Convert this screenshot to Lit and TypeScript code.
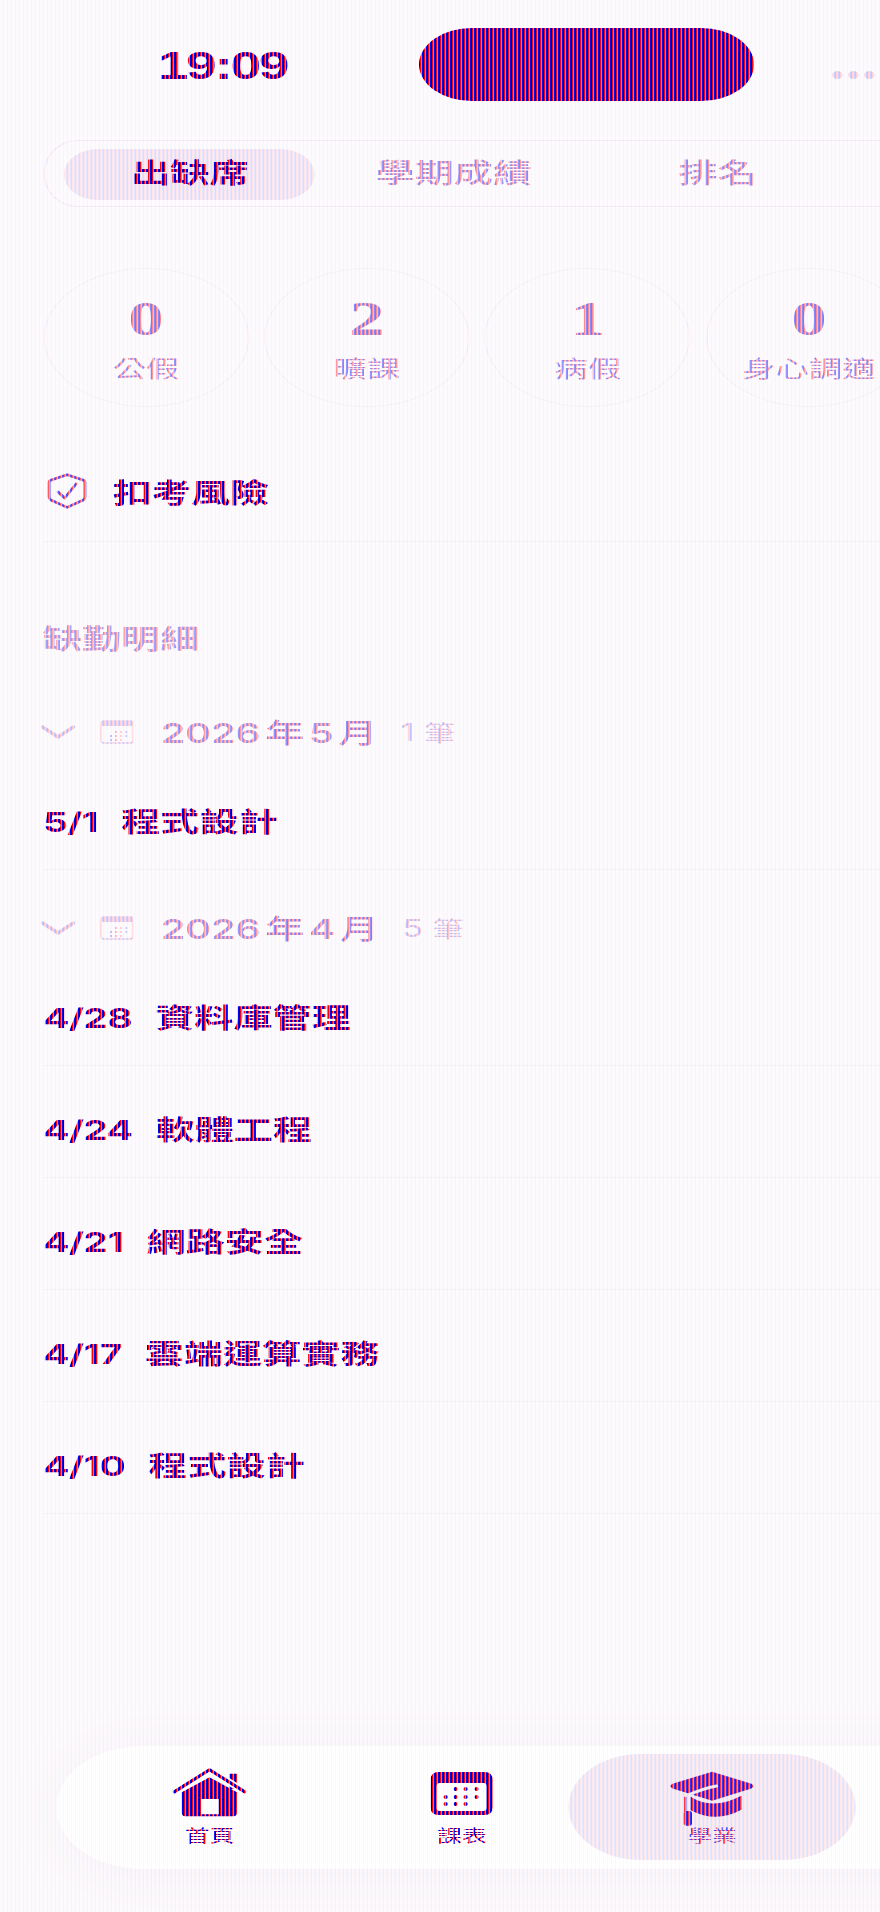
import {css, html, LitElement, svg} from "lit";
import {customElement} from "lit/decorators.js";

interface Absence {
  date: string;
  course: string;
}

interface MonthGroup {
  label: string[];
  count: string;
  rows: Absence[];
}

const STATS = [
  {value: "0", label: "公假"},
  {value: "2", label: "曠課"},
  {value: "1", label: "病假"},
  {value: "0", label: "身心調適"},
];

const MONTHS: MonthGroup[] = [
  {
    label: ["2026", "年", "5", "月"],
    count: "1",
    rows: [{date: "5/1", course: "程式設計"}],
  },
  {
    label: ["2026", "年", "4", "月"],
    count: "5",
    rows: [
      {date: "4/28", course: "資料庫管理"},
      {date: "4/24", course: "軟體工程"},
      {date: "4/21", course: "網路安全"},
      {date: "4/17", course: "雲端運算實務"},
      {date: "4/10", course: "程式設計"},
    ],
  },
];

// the whole reference is stretched sideways, so all icons use preserveAspectRatio none
const chevron = svg`<polyline points="2,2 17.5,12 33,2" fill="none" stroke="#c6c6ca" stroke-width="3.5" stroke-linecap="round" stroke-linejoin="round"/>`;

const smallCalendar = svg`
  <rect x="1" y="1" width="32" height="22" rx="3" fill="none" stroke="#cfcfd3" stroke-width="1.6"/>
  <rect x="1" y="1" width="32" height="5" rx="2" fill="#cfcfd3"/>
  ${[[15, 11], [20, 11], [25, 11], [10, 15], [15, 15], [20, 15], [25, 15], [10, 19], [15, 19], [20, 19]].map(
    ([x, y]) => svg`<rect x=${x} y=${y} width="2" height="2" fill="#c6c6ca"/>`
  )}
`;

@customElement("app-root")
export class AppRoot extends LitElement {
  static styles = css`
    :host {
      display: block;
      position: relative;
      width: 880px;
      height: 1912px;
      overflow: hidden;
      isolation: isolate;
      background: #fbfbfc;
      color: #000;
      font-family: "Liberation Sans", "Noto Sans CJK TC", sans-serif;
    }

    .page {
      display: flex;
      flex-direction: column;
      width: 607px;
      height: 1912px;
      overflow: hidden;
      transform: scaleX(1.45);
      transform-origin: 0 0;
    }

    .lcd,
    .tint {
      position: absolute;
      inset: 0;
      pointer-events: none;
    }

    .lcd {
      mix-blend-mode: screen;
      background: repeating-linear-gradient(90deg, #f00 0 1px, #0f0 1px 2px, #00f 2px 3px, #000 3px 4px);
    }

    .tint {
      mix-blend-mode: multiply;
      background: repeating-linear-gradient(90deg, #fff 0 1px, #f9fcfb 1px 2px, #fff 2px 3px, #fcf8fa 3px 4px);
    }

    .status {
      display: flex;
      flex: none;
      height: 140px;
      padding: 28px 0 0 108.8px;
      box-sizing: border-box;
    }

    .time {
      width: 180px;
      height: 76px;
      line-height: 76px;
      font-size: 38px;
      font-weight: 700;
      letter-spacing: -1.6px;
    }

    .island {
      width: 231px;
      height: 73px;
      border-radius: 37px;
      background: #000;
    }

    .dots {
      display: flex;
      gap: 3.4px;
      margin: 43px 0 0 54px;
    }

    .dots i {
      width: 7.6px;
      height: 8px;
      border-radius: 4px;
      background: #cfcfd3;
    }

    .tabs {
      display: flex;
      flex: none;
      gap: 9px;
      width: 640px;
      height: 67px;
      margin-left: 29.7px;
      padding: 8px 0 0 13.8px;
      box-sizing: border-box;
      border: 1px solid #eaeaed;
      border-radius: 24px / 34px;
    }

    .tab {
      flex: none;
      width: 173px;
      height: 51px;
      line-height: 51px;
      border-radius: 24px / 26px;
      text-align: center;
      font-size: 27px;
      font-weight: 500;
      color: #98989d;
    }

    .tab.on {
      background: #e5e5e7;
      color: #000;
      font-weight: 700;
    }

    .stats {
      display: flex;
      flex: none;
      gap: 10.4px;
      margin: 61px 0 0 29.7px;
    }

    .stat {
      display: flex;
      flex: none;
      flex-direction: column;
      align-items: center;
      width: 142px;
      height: 139px;
      box-sizing: border-box;
      padding-top: 22px;
      border: 1px solid #f1f1f3;
      border-radius: 50%;
    }

    .stat b {
      height: 56px;
      line-height: 56px;
      font-family: "Liberation Serif", serif;
      font-size: 49px;
      font-weight: 700;
      color: #8a8a8e;
    }

    .stat span {
      margin-top: 6px;
      line-height: 32px;
      font-size: 23px;
      color: #97979c;
    }

    .risk {
      display: flex;
      flex: none;
      align-items: center;
      gap: 17px;
      height: 70px;
      margin: 49px 0 0 29.7px;
      padding: 0 0 15px 2.5px;
      border-bottom: 1px solid #f0f0f2;
      font-size: 27px;
      font-weight: 700;
    }

    .risk svg {
      width: 28.5px;
      height: 36px;
    }

    .section {
      flex: none;
      height: 30px;
      line-height: 30px;
      margin: 83px 0 0 29.5px;
      font-size: 27px;
      font-weight: 700;
      color: #a6a6aa;
    }

    .month {
      display: flex;
      flex: none;
      align-items: center;
      height: 51px;
      margin-left: 28px;
      padding-bottom: 2px;
      box-sizing: border-box;
    }

    .month .chev {
      width: 24px;
      height: 14px;
    }

    .month .cal {
      width: 23.5px;
      height: 24px;
      margin: 0 19px 0 16.5px;
    }

    .month-label {
      display: flex;
      align-items: baseline;
      gap: 3.2px;
      font-size: 27px;
      font-weight: 500;
      color: #8f8f94;
    }

    .num {
      font-family: Inter, "Liberation Sans", sans-serif;
    }

    .month-label .num {
      font-size: 27px;
      font-weight: 600;
      color: #9c9ca0;
    }

    .count {
      display: flex;
      align-items: baseline;
      gap: 6.5px;
      margin-left: 16px;
      font-size: 21.5px;
      color: #c4c4c8;
    }

    .count .num {
      font-size: 24px;
    }

    .group {
      margin-top: 33px;
    }

    .row {
      display: flex;
      flex: none;
      align-items: baseline;
      gap: 16px;
      height: 112px;
      margin-left: 29.7px;
      padding-top: 50px;
      box-sizing: border-box;
      border-bottom: 1px solid #f0f0f2;
      line-height: 30px;
      font-size: 27px;
      font-weight: 700;
    }

    .row .num {
      font-size: 27px;
      letter-spacing: -0.5px;
    }

    .nav {
      display: flex;
      flex: none;
      width: 720px;
      height: 123px;
      margin: auto 0 43px 38.6px;
      padding: 8px 0 9px 19px;
      box-sizing: border-box;
      border-radius: 60px / 62px;
      background: #fff;
      box-shadow: 0 4px 60px rgba(0, 0, 0, 0.05);
    }

    .item {
      display: flex;
      flex: none;
      flex-direction: column;
      align-items: center;
      width: 174px;
      height: 106px;
      padding-top: 14px;
      box-sizing: border-box;
      font-size: 17px;
      line-height: 24px;
    }

    .item.on {
      width: 198px;
      margin: 0 -10.5px 0 -13.5px;
      border-radius: 50px / 53px;
      background: #e8e8ea;
      color: #55555a;
    }

    .item .ico {
      display: flex;
      align-items: flex-start;
      justify-content: center;
      height: 50px;
      margin-bottom: 7px;
    }

    .home {
      width: 51px;
      height: 49px;
    }

    .sched {
      width: 42.7px;
      height: 43px;
      margin-top: 4px;
    }

    .cap {
      width: 60px;
      height: 57px;
      margin-top: 2px;
      overflow: visible;
    }
  `;

  private renderMonth(month: MonthGroup) {
    return html`
      <div class="month">
        <svg class="chev" viewBox="0 0 35 14" preserveAspectRatio="none">${chevron}</svg>
        <svg class="cal" viewBox="0 0 34 24" preserveAspectRatio="none">${smallCalendar}</svg>
        <div class="month-label">
          ${month.label.map((part) => html`<span class=${/\d/.test(part) ? "num" : ""}>${part}</span>`)}
        </div>
        <div class="count"><span class="num">${month.count}</span><span>筆</span></div>
      </div>
      ${month.rows.map(
        (row) => html`<div class="row"><span class="num">${row.date}</span><span>${row.course}</span></div>`
      )}
    `;
  }

  render() {
    return html`
      <div class="page">
        <div class="status">
          <div class="time">19:09</div>
          <div class="island"></div>
          <div class="dots"><i></i><i></i><i></i></div>
        </div>

        <div class="tabs">
          <div class="tab on">出缺席</div>
          <div class="tab">學期成績</div>
          <div class="tab">排名</div>
        </div>

        <div class="stats">
          ${STATS.map(
            (s) => html`<div class="stat"><b>${s.value}</b><span>${s.label}</span></div>`
          )}
        </div>

        <div class="risk">
          <svg viewBox="50 40 120 108" preserveAspectRatio="none">
            <path d="M110 45 L158 62 Q162 63 162 68 V112 Q162 118 157 121 L110 143 L63 121 Q58 118 58 112 V68 Q58 63 62 62 Z" fill="none" stroke="#5c5c62" stroke-width="8" stroke-linejoin="round"/>
            <polyline points="84,97 103,115 136,73" fill="none" stroke="#5c5c62" stroke-width="8" stroke-linecap="round" stroke-linejoin="round"/>
          </svg>
          <span>扣考風險</span>
        </div>

        <div class="section">缺勤明細</div>

        <div style="margin-top:52px">${this.renderMonth(MONTHS[0])}</div>
        <div class="group">${this.renderMonth(MONTHS[1])}</div>

        <div class="nav">
          <div class="item">
            <div class="ico">
              <svg class="home" viewBox="70 28 216 142" preserveAspectRatio="none">
                <rect x="236" y="45" width="22" height="44" rx="2" fill="#000"/>
                <polyline points="75,97 178,33 281,97" fill="none" stroke="#fff" stroke-width="20"/>
                <polyline points="75,97 178,33 281,97" fill="none" stroke="#000" stroke-width="9" stroke-linecap="round" stroke-linejoin="round"/>
                <path fill-rule="evenodd" d="M97 98 L178 55 L258 98 V158 Q258 168 248 168 H107 Q97 168 97 158 Z M153 118 V162 H205 V118 Z" fill="#000"/>
              </svg>
            </div>
            <span>首頁</span>
          </div>
          <div class="item">
            <div class="ico">
              <svg class="sched" viewBox="0 0 62 43" preserveAspectRatio="none">
                <path fill-rule="evenodd" d="M8 0 H54 Q62 0 62 8 V35 Q62 43 54 43 H8 Q0 43 0 35 V8 Q0 0 8 0 Z M9 11 Q6 11 6 14 V36 Q6 39 9 39 H53 Q56 39 56 36 V14 Q56 11 53 11 Z" fill="#000"/>
                ${[[25, 17], [35, 17], [46, 17], [15, 25], [25, 25], [35, 25], [46, 25], [15, 32], [25, 32], [35, 32]].map(
                  ([x, y]) => svg`<circle cx=${x} cy=${y} r="2" fill="#000"/>`
                )}
              </svg>
            </div>
            <span>課表</span>
          </div>
          <div class="item on">
            <div class="ico">
              <svg class="cap" viewBox="85 30 255 170" preserveAspectRatio="none">
                <path d="M213 35 L328 71 Q340 78 328 85 L213 122 L97 85 Q85 78 97 71 Z" fill="#333338"/>
                <path d="M150 110 Q215 152 300 106 V148 Q225 190 150 150 Z" fill="#333338"/>
                <path d="M226 78 Q185 86 140 106" fill="none" stroke="#e8e8ea" stroke-width="9" stroke-linecap="round"/>
                <path d="M134 110 V156" stroke="#333338" stroke-width="7" fill="none"/>
                <rect x="130" y="152" width="24" height="44" rx="8" fill="#333338"/>
              </svg>
            </div>
            <span>學業</span>
          </div>
          <div class="item">
            <div class="ico"></div>
            <span></span>
          </div>
        </div>
      </div>
      <div class="tint"></div>
      <div class="lcd"></div>
    `;
  }
}

declare global {
  interface HTMLElementTagNameMap {
    "app-root": AppRoot;
  }
}
